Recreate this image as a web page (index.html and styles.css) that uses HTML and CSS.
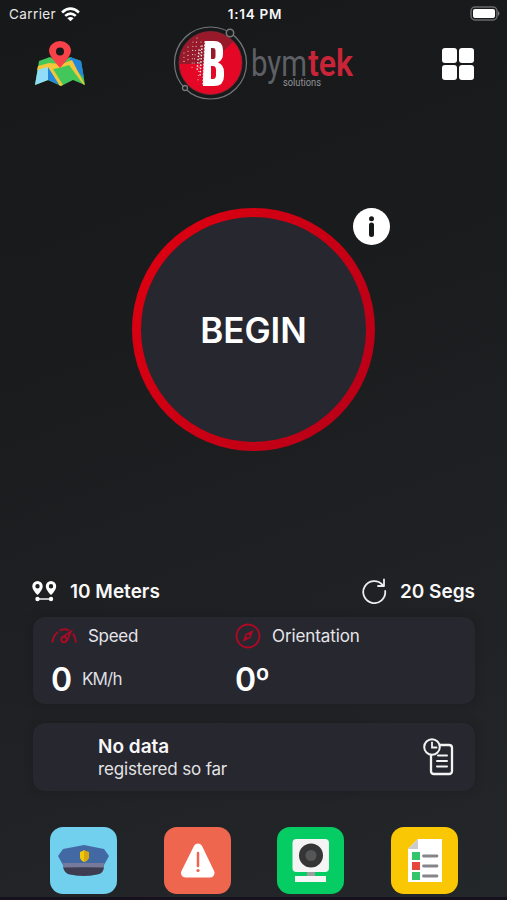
FILE: index.html
```
<!DOCTYPE html>
<html lang="en">
<head>
<meta charset="utf-8">
<title>Bymtek Solutions</title>
<link rel="stylesheet" href="styles.css">
</head>
<body>
<main class="screen">
  <div class="status">
    <div class="carrier"><span>Carrier</span>
      <svg width="19" height="15" viewBox="0 0 18 14" fill="none" stroke="#fff" stroke-width="2.5"><path d="M1 5.1Q9-2 17 5.1M4 8.3Q9 3.9 14 8.3"/><path d="M9 13.5 6 10.5Q9 8.1 12 10.5Z" fill="#fff" stroke="none"/></svg>
    </div>
    <span class="clock">1:14 PM</span>
    <svg class="battery" width="31" height="16" viewBox="0 0 31 16"><rect x="1" y="1" width="26" height="13" rx="4" fill="#1a1b1c" stroke="#68696b" stroke-width="1.5"/><rect x="3" y="3" width="22" height="9" rx="2" fill="#fff"/><path d="M28 5q3 2.5 0 5z" fill="#77787a"/></svg>
  </div>

  <header class="top">
    <svg class="map" width="50" height="46" viewBox="0 0 50 46">
      <path d="M4 20 15 16 26 22 35 16 46 20 50 44 38 39 26 45 13 39 0 44Z" fill="#43c75b"/>
      <path d="M3 27 13 25V39L0 44Z" fill="#91dcf7"/><path d="M13 25 25 44 13 39Z" fill="#2389dd"/>
      <path d="M35 16 46 20 49 37 35 23Z" fill="#2387dc"/>
      <path d="M3 25 14 22 27 23 37 19 50 44 48 43 34 24 24 27 18 28 28 44 25 45 13 26 2 29Z" fill="#f5c63a"/>
      <path d="M25 27Q14 15 14 10a11 10 0 0 1 22 0Q36 15 25 27Z" fill="#f84249"/><circle cx="25" cy="10.500" r="4" fill="#17191a"/>
    </svg>
    <svg class="logo" width="184" height="76" viewBox="0 0 184 76">
      <defs><clipPath id="disc"><circle cx="38.500" cy="37" r="31.500"/></clipPath></defs>
      <circle cx="38.500" cy="37" r="36" fill="none" stroke="#737577" stroke-width="1.200"/>
      <g clip-path="url(#disc)"><path d="M5 38V5H72V38Z" fill="#97192a"/><path d="M5 38H38L62 15 75 10V72H5Z" fill="#e50726"/></g>
      <circle cx="38.500" cy="37" r="31.500" fill="none" stroke="#8b2733" stroke-width=".8"/>
      <circle cx="58" cy="7" r="3.700" fill="#1a1b1c" stroke="#77797b" stroke-width="1.500"/>
      <circle cx="13" cy="62" r="2.500" fill="#1a1b1c" stroke="#77797b" stroke-width="1.300"/>
      <path fill-rule="evenodd" d="M33 15H42Q51 15 51 24V28Q51 34 46 36.500Q52 39 52 46V50Q52 60 42 60H31V52ZM39 22V33H41.500Q43.500 33 43.500 30V25Q43.500 22 41 22ZM39 40V53H41Q44 53 44 49V44Q44 40 41 40Z" fill="#fff"/>
      <g fill="none" stroke="#eee7e8" stroke-linecap="round">
        <path stroke-width="1.700" stroke-dasharray="0 3.200" d="M33 16 31 58M30 20 28 51M27 24 25 45"/>
        <path stroke-width="1.100" stroke-dasharray="0 4.200" d="M21 16 20 42M16 21 16 36M12 27V36M25 12 22 38M29 16 26 54"/>
      </g>
      <text class="brand" x="79" y="50" textLength="56" lengthAdjust="spacingAndGlyphs">bym</text>
      <text class="brand accent" x="136" y="50" textLength="45" lengthAdjust="spacingAndGlyphs">tek</text>
      <text class="tagline" x="111" y="60" textLength="38" lengthAdjust="spacingAndGlyphs">solutions</text>
    </svg>
    <svg class="tiles" width="32" height="32" viewBox="0 0 32 32" fill="#fff"><rect width="15" height="15" rx="3"/><rect x="17" width="15" height="15" rx="3"/><rect y="17" width="15" height="15" rx="3"/><rect x="17" y="17" width="15" height="15" rx="3"/></svg>
  </header>

  <section class="begin-area">
    <div class="begin-wrap">
      <button class="begin"><span>BEGIN</span></button>
      <svg class="info" width="37" height="37" viewBox="0 0 37 37"><circle cx="18.500" cy="18.500" r="18.500" fill="#fff"/><circle cx="18.500" cy="10.800" r="2.500" fill="#17181a"/><path d="M18.500 17V26.500" stroke="#17181a" stroke-width="5" stroke-linecap="round"/></svg>
    </div>
  </section>

  <section class="intervals">
    <div class="interval"><svg width="25" height="21" viewBox="0 0 25 21"><path fill="#fff" fill-rule="evenodd" d="M5.500 14Q.3 9 .3 5.200a5.200 5.200 0 0 1 10.400 0Q10.700 9 5.500 14ZM5.500 3a2.200 2.200 0 1 0 0 4.400 2.200 2.200 0 0 0 0-4.400ZM19 14Q13.800 9 13.800 5.200a5.200 5.200 0 0 1 10.400 0Q24.200 9 19 14ZM19 3a2.200 2.200 0 1 0 0 4.400A2.200 2.200 0 0 0 19 3Z"/><path d="M5 18H20" stroke="#ddd" stroke-width="1.700"/><circle cx="5.500" cy="18" r="2.200" fill="#fff"/><circle cx="19" cy="18" r="2.200" fill="#fff"/></svg><span>10 Meters</span></div>
    <div class="interval"><svg width="25" height="26" viewBox="0 0 25 26" fill="none" stroke="#ededee" stroke-width="1.800" stroke-linecap="round" stroke-linejoin="round"><path d="M23.200 13A11 11 0 1 1 20.500 6.800M22 1.500V8H16"/></svg><span>20 Segs</span></div>
  </section>

  <section class="card metrics">
    <div class="metric">
      <div class="label speed"><svg width="26" height="26" viewBox="0 0 26 26" fill="none" stroke="#a90a24" stroke-width="2"><path d="M1.300 19.500Q2.200 12.500 7 9M8.500 7.600Q13 5 18 7.300M22 10.500Q24.500 14 25 19.500"/><circle cx="13" cy="16.500" r="2.700"/><path d="M12.500 13.500 20 8.500 16 18" stroke-width="1.800"/></svg><span>Speed</span></div>
      <div class="value"><b>0</b><span>KM/h</span></div>
    </div>
    <div class="metric">
      <div class="label"><svg width="26" height="26" viewBox="0 0 26 26"><circle cx="13" cy="13" r="11.500" fill="none" stroke="#a90a24" stroke-width="1.900"/><path fill="#a90a24" fill-rule="evenodd" d="M18.800 7 15.400 15.200 7.500 19 10.600 10.800ZM13 11.500a1.500 1.500 0 1 0 0 3 1.500 1.500 0 0 0 0-3Z"/></svg><span>Orientation</span></div>
      <div class="value"><b>0º</b></div>
    </div>
  </section>

  <section class="card records">
    <div><strong>No data</strong><p>registered so far</p></div>
    <svg width="32" height="38" viewBox="0 0 32 38" fill="none" stroke="#f3f3f4" stroke-width="2.300" stroke-linecap="round"><path d="M17 7H26Q29 7 29 10V33Q29 36 26 36H11Q8 36 8 33V17"/><path d="M15 17.500H24M14 23H24M14 28.500H24" stroke-width="2"/><circle cx="9" cy="9" r="7.800" stroke-width="2"/><path d="M9 4.500V9.500H13.500" stroke-width="1.800"/></svg>
  </section>

  <nav class="actions">
    <button class="action police"><svg viewBox="0 0 67 67"><path d="M8 29 13 22 34 18 54 22 59 29 54 38Q53 45 49 47Q34 50 18 47Q14 44 13 38Z" fill="#4269a4"/><path d="M13 36H54L53 43H14Z" fill="#77799a"/><path d="M13 40.500Q34 40 54 40.500Q53 46 49 47Q34 51 18 47Q14 45 13 40Z" fill="#3d3c51"/><path d="M30 25Q33 24 34 23Q36 25 39 25V30Q38 34 34 35Q30 33 30 30Z" fill="#f4c60c"/><path d="M34 23Q36 25 39 25V30Q38 34 34 35Z" fill="#d7a80b"/></svg></button>
    <button class="action warning"><svg viewBox="0 0 67 67"><path d="M34 21 21.500 46H46Z" fill="#fff" stroke="#fff" stroke-width="9" stroke-linejoin="round"/><path d="M34 26V39" stroke="#ef654f" stroke-width="2.500" stroke-linecap="round"/><circle cx="34" cy="43.500" r="1.600" fill="#ef654f"/></svg></button>
    <button class="action camera"><svg viewBox="0 0 67 67"><path d="M30 43H38V51H30Z" fill="#9c9f9e"/><rect x="15.500" y="12" width="36.500" height="33" rx="4" fill="#f4f4f5"/><circle cx="34" cy="28.500" r="12" fill="#353536"/><circle cx="34" cy="28.500" r="5.500" fill="#555657"/><path d="M18 49H49V55H18Z" fill="#f5f5f5"/></svg></button>
    <button class="action report"><svg viewBox="0 0 67 67"><path d="M27 12H51V55H17V22Z" fill="#fff"/><path d="M27 12V22H17Z" fill="#cbcbcf"/><path d="M21 25H29V33H21ZM21 45H29V53H21Z" fill="#31c66b"/><path d="M21 35H29V43H21Z" fill="#e7463d"/><path d="M32.500 29H46M32.500 39H46M32.500 49H46" stroke="#858589" stroke-width="2.800" stroke-linecap="round"/></svg></button>
  </nav>
</main>
</body>
</html>
```
FILE: styles.css
```
* { box-sizing: border-box; }
body { margin: 0; }
button { padding: 0; border: 0; font: inherit; color: inherit; }
p { margin: 0; }
svg { display: block; flex: none; }
.screen { width: 507px; height: 900px; overflow: hidden; color: #f8f8f9; font-family: Inter, "Liberation Sans", sans-serif; background: linear-gradient(160deg, #171819, #1b1c1e 40%, #24272a); display: flex; flex-direction: column; border-bottom: 3px solid #17101d; }
.status { height: 26px; flex: none; display: grid; grid-template-columns: 1fr auto 1fr; padding: 2px 6px 0 9px; align-items: center; font-size: 13.5px; line-height: 22px; }
.carrier { display: flex; gap: 5px; align-items: center; color: #e8e8e8; letter-spacing: .4px; }
.clock { font-weight: 600; letter-spacing: .75px; }
.battery { justify-self: end; }
.top { height: 76px; flex: none; display: grid; grid-template-columns: 172px 184px 1fr; }
.map { margin: 15px 0 0 35px; }
.logo { overflow: visible; }
.tiles { justify-self: end; margin: 22px 33px 0 0; }
.brand { font: 37px Roboto, sans-serif; fill: #5e6065; }
.accent { font-weight: 600; fill: #c92437; }
.tagline { font: 11.5px Roboto, sans-serif; fill: #919295; }
.begin-area { height: 476px; flex: none; padding-top: 106px; }
.begin-wrap { position: relative; width: 243px; height: 243px; margin-left: 132px; }
.begin { width: 243px; height: 243px; border-radius: 50%; padding: 9px; background: linear-gradient(120deg, #e00010, #b50018); }
.begin span { width: 100%; height: 100%; border-radius: 50%; background: #27272f; display: flex; align-items: center; justify-content: center; font-size: 35px; font-weight: 600; color: #fff; }
.info { position: absolute; left: 221px; top: 0; }
.intervals { height: 39px; flex: none; padding: 0 32px; display: flex; justify-content: space-between; align-items: flex-start; }
.interval { display: flex; align-items: center; height: 26px; gap: 13px; font-size: 19px; font-weight: 600; white-space: nowrap; }
.card { flex: none; width: 442px; margin-left: 33px; border-radius: 12px; background: #27272f; box-shadow: 0 0 8px #15171a80; }
.metrics { height: 87px; padding: 5px 18px; display: grid; grid-template-columns: 184px 1fr; }
.label { display: flex; align-items: center; gap: 11px; height: 27px; font-size: 17px; letter-spacing: -.1px; color: #e5e5e9; }
.speed { letter-spacing: -.3px; }
.value { display: flex; align-items: center; gap: 11px; height: 36px; margin-top: 12px; font-size: 17px; letter-spacing: -.8px; color: #dedee2; }
.value b { font-size: 32px; font-weight: 600; letter-spacing: -1.2px; color: #fff; }
.records { height: 68px; margin-top: 19px; padding: 0 20px 0 65px; display: flex; align-items: center; justify-content: space-between; }
.records strong { display: block; font-size: 19px; line-height: 23px; font-weight: 600; }
.records p { font-size: 17px; line-height: 22px; letter-spacing: -.17px; color: #e3e3e6; }
.actions { margin: 36px 0 0 50px; width: 408px; display: flex; justify-content: space-between; }
.action { width: 67px; height: 67px; border-radius: 13px; overflow: hidden; }
.action svg { width: 67px; height: 67px; }
.police { background: #70d0ee; }
.warning { background: #ef664f; }
.camera { background: #06cc64; }
.report { background: #fac704; }
```
